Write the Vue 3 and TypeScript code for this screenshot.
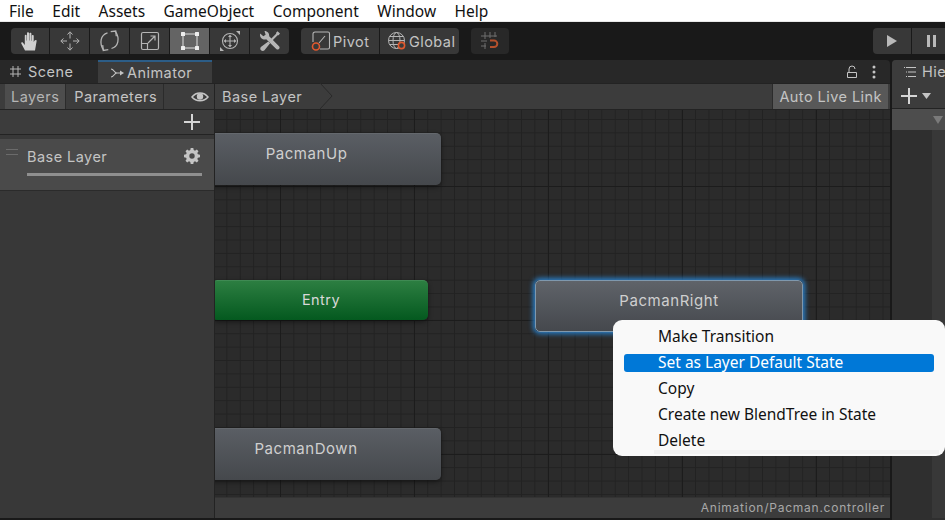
<script setup lang="ts">
const menus: string[] = ['File', 'Edit', 'Assets', 'GameObject', 'Component', 'Window', 'Help']
const items: string[] = ['Make Transition', 'Set as Layer Default State', 'Copy', 'Create new BlendTree in State', 'Delete']
</script>

<template>
  <div class="app">
    <nav class="menubar">
      <span v-for="m in menus" :key="m" class="menu">{{ m }}</span>
    </nav>
    <div class="toolbar">
      <div class="group tools">
        <button class="tool first">
          <svg width="22" height="22" viewBox="0 0 22 22"><path fill="#d0d0d0" d="M6 20.500 2.300 13.600c-.6-1.200 1-2 1.700-.9L5.800 15V5.600c0-1.300 1.800-1.300 1.800 0V10.500h.4V3.200c0-1.300 2-1.300 2 0V10.500h.4V3.800c0-1.300 2-1.300 2 0V10.700h.4V5.800c0-1.200 1.900-1.200 1.900 0V12l.9-1.500c.8-1.200 2.600-.5 2 .8L16 20.500Z"/></svg>
        </button>
        <button class="tool">
          <svg width="22" height="22" viewBox="0 0 22 22" fill="none" stroke="#b5b5b5" stroke-width="1"><path d="M11 3v5.500M11 13.500V19M2.500 11H8M14 11h5.500"/><path d="M8.500 4.500 11 1.800l2.500 2.700M8.500 17.500 11 20.200l2.500-2.700M4.500 8.500 1.800 11l2.700 2.500M17.500 8.500 20.200 11l-2.700 2.500"/></svg>
        </button>
        <button class="tool">
          <svg width="25" height="24" viewBox="0 0 25 24" fill="none" stroke="#b5b5b5" stroke-width="1.300"><path d="M10.500 3.900C3.500 6 2 14 6.500 21"/><path d="M14.500 19.500C21.500 17.400 23 9.400 18.500 2.500"/><path d="M11.300 20.700 6.300 21.400 5.700 16.100M13.700 2.700 18.700 2 19.300 7.300"/></svg>
        </button>
        <button class="tool">
          <svg width="20" height="20" viewBox="0 0 20 20" fill="none" stroke="#b5b5b5" stroke-width="1.200"><rect x="1.500" y="1.500" width="17" height="17" rx="1.500"/><path d="M1.500 12.500h6v6M8 12l7-7M10.500 5H15v4.500"/></svg>
        </button>
        <button class="tool active">
          <svg width="20" height="20" viewBox="0 0 20 20"><path fill="none" stroke="#e0e0e0" stroke-width="1" d="M3 3h14v14H3Z"/><g fill="#eee"><rect x="1" y="1" width="4" height="4" rx=".6"/><rect x="15" y="1" width="4" height="4" rx=".6"/><rect x="1" y="15" width="4" height="4" rx=".6"/><rect x="15" y="15" width="4" height="4" rx=".6"/></g></svg>
        </button>
        <button class="tool">
          <svg width="22" height="22" viewBox="0 0 22 22" fill="none" stroke="#b5b5b5" stroke-width="1.100"><circle cx="11" cy="11" r="7.500"/><path d="M11 6v10M6 11h10"/><path fill="#b5b5b5" stroke="none" d="M11 4.500 13 7H9ZM11 17.500 9 15h4ZM4.500 11 7 9v4ZM17.500 11 15 13V9ZM21 1v4l-4-4ZM1 21v-4l4 4Z"/></svg>
        </button>
        <button class="tool">
          <svg width="22" height="22" viewBox="0 0 22 22"><path fill="#b5b5b5" d="M5.500 1C8.500 1 10.500 3.300 10.200 6.200L20 16.300c1.800 1.800-.9 4.400-2.700 2.700L7.200 9.200C4 10.100 1 8 1 4.900c0-.5.1-1 .2-1.400L4.300 6.300 6.600 4.700 5.500 1Z"/><path fill="#b5b5b5" d="M18.500 1.200 21 3.500 19.600 5.300 18.600 5.300 12 12l-1.600-1.600 6.700-6.600V2.700ZM9.300 11.500 11.100 13.300 5.500 20.300C4.500 21.400 3 21.300 2 20.300 1 19.200 1 17.800 2.200 16.800Z"/></svg>
        </button>
      </div>
      <div class="group pivots">
        <button class="wide pivot-btn">
          <svg width="20" height="20" viewBox="0 0 20 20" fill="none"><path stroke="#b5b5b5" stroke-width="1.100" d="M4 1h13a1.500 1.500 0 0 1 1.500 1.500v14a1.500 1.500 0 0 1-1.500 1.500H9M2 11V3A2 2 0 0 1 4 1M8 12l6-7"/><circle cx="5" cy="15.500" r="3.500" stroke="#e2592e" stroke-width="1.600"/></svg>
          <span>Pivot</span>
        </button>
        <button class="wide global-btn">
          <svg width="20" height="20" viewBox="0 0 20 20" fill="none"><g stroke="#b5b5b5" stroke-width="1"><circle cx="9.500" cy="9.500" r="8"/><ellipse cx="9.500" cy="9.500" rx="3.500" ry="8"/><path d="M1.500 9.500h16M2.500 5.500h14M2.500 13.500h10"/></g><circle cx="14.500" cy="14.500" r="3.100" fill="#3a3a3a" stroke="#e2592e" stroke-width="1.600"/></svg>
          <span>Global</span>
        </button>
      </div>
      <div class="group snap">
        <svg width="20" height="20" viewBox="0 0 20 20" fill="none"><path stroke="#6f6f6f" d="M5 1v7M10 1v6M15 1v5M1 5h16M1 10h6M1 15h5M5 12v6"/><path stroke="#b5502c" stroke-width="2" d="M10 9.500h4a3.300 3.300 0 0 1 0 6.600h-4"/></svg>
      </div>
      <div class="spacer"></div>
      <div class="group play">
        <button class="play-btn">
          <svg width="12" height="14" viewBox="0 0 12 14"><path fill="#b9b9b9" d="M1 1v12l10-6Z"/></svg>
        </button>
        <button class="play-btn pause">
          <svg width="12" height="14" viewBox="0 0 12 14"><path fill="#b9b9b9" d="M1 1h3v12H1ZM7 1h3v12H7Z"/></svg>
        </button>
      </div>
    </div>
    <div class="workspace">
      <section class="animator">
        <header class="tabs">
          <div class="tab scene">
            <svg width="13" height="13" viewBox="0 0 13 13" fill="none" stroke="#b5b5b5"><path d="M4 1v11M9 1v11M1 4h11M1 9h11"/></svg>
            <span>Scene</span>
          </div>
          <div class="tab animator-tab">
            <svg width="14" height="12" viewBox="0 0 14 12" fill="none" stroke="#c4c4c4" stroke-width="1.200"><path d="M1 2c3 0 3 4 6 4M1 10c3 0 3-4 6-4h4"/><path fill="#c4c4c4" stroke="none" d="m10 3.500 4 2.500-4 2.500Z"/></svg>
            <span>Animator</span>
          </div>
          <div class="spacer"></div>
          <svg class="lock" width="12" height="14" viewBox="0 0 12 14" fill="none" stroke="#c4c4c4"><path d="M1.500 7.500h9v5h-9ZM3 7.500V4a3 3 0 0 1 6 0"/></svg>
          <svg class="dots" width="4" height="14" viewBox="0 0 4 14"><g fill="#c4c4c4"><circle cx="2" cy="2" r="1.500"/><circle cx="2" cy="7" r="1.500"/><circle cx="2" cy="12" r="1.500"/></g></svg>
        </header>
        <div class="subbar">
          <div class="sub-left">
            <span class="seg seg-active">Layers</span>
            <span class="seg seg-params">Parameters</span>
            <div class="spacer"></div>
            <svg class="eye" width="18" height="12" viewBox="0 0 18 12"><path fill="none" stroke="#c4c4c4" stroke-width="1.500" d="M1 6C5 .5 13 .5 17 6 13 11 5 11 1 6Z"/><circle cx="9" cy="5.500" r="3.200" fill="#c4c4c4"/></svg>
          </div>
          <div class="crumb">
            <span>Base Layer</span>
            <svg class="chev" width="13" height="26" viewBox="0 0 13 26" fill="none"><path fill="#3c3c3c" stroke="#2a2a2a" d="M0 0 12 13 0 26"/></svg>
          </div>
          <div class="spacer"></div>
          <span class="live">Auto Live Link</span>
        </div>
        <div class="content">
          <aside class="sidebar">
            <div class="side-head">
              <svg width="16" height="16" viewBox="0 0 16 16"><path fill="#d5d5d5" d="M7 0h2v7h7v2H9v7H7V9H0V7h7Z"/></svg>
            </div>
            <div class="layer">
              <div class="handle"></div>
              <div class="layer-body">
                <div class="layer-top">
                  <span>Base Layer</span>
                  <svg class="gear" width="16" height="16" viewBox="0 0 16 16"><path fill="#c4c4c4" fill-rule="evenodd" d="M6.700 0h2.600l.4 2.100 1.300.6L12.800 1.500l1.700 1.700-1.200 1.800.6 1.300 2.100.4v2.600l-2.100.4-.6 1.300 1.200 1.800-1.700 1.700-1.800-1.200-1.300.6-.4 2.100H6.700l-.4-2.100-1.300-.6-1.800 1.200-1.700-1.700L2.700 11l-.6-1.300L0 9.300V6.700l2.100-.4.600-1.300L1.500 3.200l1.700-1.700L5 2.700l1.300-.6ZM8 5.300a2.700 2.700 0 1 0 0 5.400 2.700 2.700 0 0 0 0-5.400Z"/></svg>
                </div>
                <div class="layer-bar"></div>
              </div>
            </div>
          </aside>
          <div class="main">
            <div class="canvas">
              <div class="node up">PacmanUp</div>
              <div class="node entry">Entry</div>
              <div class="node right">PacmanRight</div>
              <div class="node down">PacmanDown</div>
            </div>
            <footer class="status">Animation/Pacman.controller</footer>
          </div>
        </div>
      </section>
      <section class="hierarchy">
        <div class="h-tab">
          <svg width="13" height="12" viewBox="0 0 13 12" fill="none" stroke="#c4c4c4"><path d="M3 1.500h10M5 6h8M5 10.500h8M1 1.500h1M3 6h1M3 10.500h1"/></svg>
          <span>Hierarchy</span>
        </div>
        <div class="h-tools">
          <svg width="16" height="16" viewBox="0 0 16 16"><path fill="#d5d5d5" d="M7 0h2v7h7v2H9v7H7V9H0V7h7Z"/></svg>
          <svg width="9" height="6" viewBox="0 0 9 6"><path fill="#c4c4c4" d="M0 0h9L4.500 6Z"/></svg>
        </div>
        <div class="h-drop">
          <svg width="10" height="8" viewBox="0 0 10 8"><path fill="#7a7a7a" d="M0 0h10L5 8Z"/></svg>
        </div>
        <div class="h-body">
          <div class="h-list"></div>
          <div class="h-scroll"></div>
        </div>
      </section>
    </div>
    <ul class="context">
      <li v-for="(it, i) in items" :key="it" class="ctx-item" :class="{ hot: i === 1 }">{{ it }}</li>
    </ul>
  </div>
</template>

<style>
html, body { margin: 0; background: #191919; overflow: hidden; }
</style>

<style scoped>
.app {
  position: relative;
  width: 945px;
  height: 520px;
  overflow: hidden;
  display: flex;
  flex-direction: column;
  background: #191919;
  font-family: Inter, "Liberation Sans", sans-serif;
  font-size: 14.5px;
  letter-spacing: 0.45px;
  color: #c4c4c4;
}
button { border: 0; padding: 0; margin: 0; font: inherit; letter-spacing: inherit; color: inherit; }
svg { flex: none; }
.spacer { flex: 1; }

.menubar {
  height: 21px;
  flex: none;
  display: flex;
  align-items: center;
  padding-left: 9px;
  gap: 18.5px;
  background: #fff;
  border-bottom: 1px solid #e8e8e8;
  font-family: "Noto Sans", sans-serif;
  font-size: 15.5px;
  letter-spacing: 0;
  color: #111;
}

.toolbar {
  height: 38px;
  flex: none;
  box-sizing: border-box;
  display: flex;
  align-items: center;
  padding: 0 0 0 11px;
  background: #191919;
}
.group { display: flex; height: 26px; border-radius: 4px; overflow: hidden; }
.tools { gap: 1px; }
.tool {
  width: 39px;
  height: 26px;
  background: #383838;
  display: flex;
  align-items: center;
  justify-content: center;
}
.tool.first { width: 38px; }
.tool.active { background: #646464; }
.pivots { margin-left: 12px; gap: 1px; }
.wide {
  height: 26px;
  background: #383838;
  display: flex;
  align-items: center;
  gap: 2px;
  padding-left: 10px;
  box-sizing: border-box;
}
.pivot-btn { width: 78px; }
.global-btn { width: 79px; padding-left: 7px; }
.snap {
  margin-left: 12px;
  width: 38px;
  background: #282828;
  align-items: center;
  justify-content: center;
}
.play { gap: 1px; border-radius: 4px 0 0 4px; margin-right: -7px; flex: none; }
.play-btn {
  width: 38px;
  height: 26px;
  background: #383838;
  display: flex;
  align-items: center;
  justify-content: center;
}
.pause { width: 40px; }

.workspace { flex: 1; min-height: 0; display: flex; gap: 2px; }
.animator { width: 890px; flex: none; display: flex; flex-direction: column; }

.tabs {
  height: 23px;
  flex: none;
  display: flex;
  align-items: stretch;
  background: #282828;
  border-radius: 0 4px 0 0;
}
.tab { display: flex; align-items: center; box-sizing: border-box; }
.scene { width: 98px; padding-left: 9px; gap: 6px; }
.animator-tab {
  width: 114px;
  background: #3c3c3c;
  border-top: 2px solid #2c5d87;
  padding-left: 12px;
  gap: 3px;
}
.lock { align-self: center; margin-right: 14px; }
.dots { align-self: center; margin-right: 14px; }

.subbar {
  height: 27px;
  flex: none;
  box-sizing: border-box;
  display: flex;
  align-items: stretch;
  background: #3c3c3c;
  border-top: 1px solid #232323;
  border-bottom: 1px solid #232323;
}
.sub-left {
  width: 215px;
  flex: none;
  display: flex;
  align-items: stretch;
  box-sizing: border-box;
  padding-left: 5px;
  border-right: 1px solid #232323;
}
.seg {
  display: flex;
  align-items: center;
  padding: 0 6px;
  border-right: 1px solid #2b2b2b;
}
.seg-params { padding-left: 8px; }
.seg-active { background: #4d4d4d; color: #b5b5b5; }
.eye { align-self: center; margin-right: 5px; }
.crumb {
  display: flex;
  align-items: center;
  position: relative;
  width: 98px;
  padding-left: 7px;
  white-space: nowrap;
}
.chev { position: absolute; right: -13px; top: -1px; }
.live {
  display: flex;
  align-items: center;
  padding: 0 6px;
  background: #585858;
  margin-right: 2px;
  border-left: 1px solid #2b2b2b;
}

.content { flex: 1; min-height: 0; display: flex; margin-bottom: 2px; }
.sidebar {
  width: 214px;
  flex: none;
  background: #383838;
  border-right: 1px solid #232323;
}
.side-head {
  height: 25px;
  box-sizing: border-box;
  display: flex;
  align-items: center;
  justify-content: flex-end;
  padding-right: 14px;
  background: #3c3c3c;
  border-bottom: 1px solid #232323;
}
.layer {
  margin-top: 4px;
  height: 52px;
  box-sizing: border-box;
  display: flex;
  background: #4a4a4a;
  border-bottom: 1px solid #2b2b2b;
}
.handle {
  width: 12px;
  height: 4px;
  margin: 10px 9px 0 6px;
  border-top: 1px solid #6b6b6b;
  border-bottom: 1px solid #6b6b6b;
}
.layer-body { flex: 1; padding-right: 12px; }
.layer-top {
  height: 34px;
  display: flex;
  align-items: center;
  justify-content: space-between;
}
.gear { margin-right: 2px; }
.layer-bar { height: 3px; background: #8f8f8f; }

.main { flex: 1; min-width: 0; display: flex; flex-direction: column; }
.canvas {
  flex: 1;
  position: relative;
  overflow: hidden;
  background-color: #2b2b2b;
  background-image:
    linear-gradient(to right, #1c1c1c 1px, transparent 1px),
    linear-gradient(to bottom, #1c1c1c 1px, transparent 1px),
    linear-gradient(to right, #222 1px, transparent 1px),
    linear-gradient(to bottom, #222 1px, transparent 1px);
  background-size: 134px 134px, 134px 134px, 13.4px 13.4px, 13.4px 13.4px;
  background-position: 65px 76px, 65px 76px, 11.4px 9px, 11.4px 9px;
}
.node {
  position: absolute;
  box-sizing: border-box;
  width: 268px;
  height: 52px;
  padding-top: 11px;
  text-align: center;
  line-height: 17px;
  font-size: 15px;
  letter-spacing: 0.55px;
  border-radius: 5px;
  color: #cfcfcf;
  background: linear-gradient(#5a5e64, #45484c);
  border-top: 1px solid #64686d;
  box-shadow: 0 2px 5px rgba(0, 0, 0, 0.45);
}
.up { left: -43px; top: 23px; width: 269px; }
.down { left: -43px; top: 318px; width: 269px; padding-right: 1px; }
.entry {
  left: -3px;
  top: 170px;
  width: 216px;
  height: 40px;
  padding-top: 10px;
  padding-left: 2px;
  font-size: 14.5px;
  letter-spacing: 0.45px;
  color: #d8d8d8;
  background: linear-gradient(#2c7e41, #04591f);
  border-top-color: #3f8a53;
}
.right {
  left: 320px;
  top: 170px;
  background: linear-gradient(#5f6369, #45484d);
  border: 1px solid #7f98ad;
  box-shadow: 0 0 5px 2px #2a7fc8;
}
.status {
  height: 21px;
  flex: none;
  box-sizing: border-box;
  background: #3c3c3c;
  border-top: 1px solid #333;
  text-align: right;
  padding-right: 5px;
  font-size: 12px;
  line-height: 20px;
  letter-spacing: 0.75px;
  color: #a8a8a8;
}

.hierarchy {
  flex: 1;
  min-width: 0;
  display: flex;
  flex-direction: column;
  background: #2f2f2f;
  border-radius: 4px 0 0 0;
  overflow: hidden;
  white-space: nowrap;
}
.h-tab {
  height: 23px;
  flex: none;
  display: flex;
  align-items: center;
  gap: 6px;
  padding-left: 11px;
  background: #3c3c3c;
}
.h-tools {
  height: 26px;
  flex: none;
  box-sizing: border-box;
  display: flex;
  align-items: center;
  gap: 5px;
  padding-left: 9px;
  background: #3c3c3c;
  border-bottom: 1px solid #232323;
}
.h-drop {
  height: 21px;
  flex: none;
  box-sizing: border-box;
  background: #4d4d4d;
  display: flex;
  align-items: center;
  justify-content: flex-end;
  padding-right: 2px;
}
.h-body { flex: 1; display: flex; margin-bottom: 2px; }
.h-list { flex: 1; background: #2f2f2f; }
.h-scroll { width: 13px; background: #383838; }

.context {
  position: absolute;
  left: 613px;
  top: 320px;
  width: 332px;
  height: 136px;
  box-sizing: border-box;
  margin: 0;
  padding: 4px 11px 0;
  list-style: none;
  border-radius: 9px;
  background: #f9f9f9 linear-gradient(#f1f1f1, #f1f1f1) 41px 130px / 285px 4px no-repeat;
  font-family: "Noto Sans", sans-serif;
  font-size: 15.5px;
  letter-spacing: 0;
  color: #111;
}
.ctx-item {
  height: 26px;
  padding-left: 34px;
  line-height: 25px;
  box-sizing: border-box;
}
.ctx-item.hot {
  height: 18px;
  margin: 4px 0;
  line-height: 17px;
  background: #0078d7;
  color: #fff;
  border-radius: 3px;
}
</style>
